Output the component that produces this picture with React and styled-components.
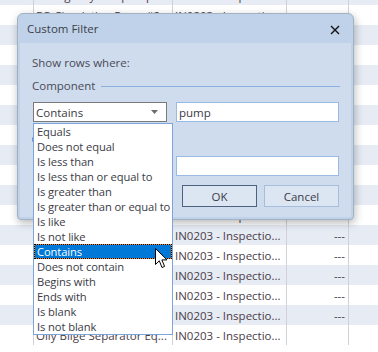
import React from "react";
import styled, { createGlobalStyle } from "styled-components";

const GlobalStyle = createGlobalStyle`
  html, body {
    margin: 0;
    padding: 0;
    background: #ffffff;
    overflow: hidden;
  }
  body {
    font-family: "Open Sans", "Noto Sans", sans-serif;
  }
`;

const rows = [
  { name: "Emergency Fire pump", job: "IN0203 - Inspectio...", due: "" },
  { name: "EQ Circulating Pump#2", job: "IN0203 - Inspectio...", due: "" },
  { name: "", job: "IN0203 - Inspectio...", due: "---" },
  { name: "", job: "IN0203 - Inspectio...", due: "---" },
  { name: "", job: "IN0203 - Inspectio...", due: "---" },
  { name: "", job: "IN0203 - Inspectio...", due: "---" },
  { name: "", job: "IN0203 - Inspectio...", due: "---" },
  { name: "", job: "IN0203 - Inspectio...", due: "---" },
  { name: "", job: "IN0203 - Inspectio...", due: "---" },
  { name: "", job: "IN0203 - Inspectio...", due: "---" },
  { name: "", job: "IN0203 - Inspectio...", due: "---" },
  { name: "", job: "IN0203 - Inspectio...", due: "---" },
  { name: "", job: "IN0203 - Inspectio...", due: "---" },
  { name: "", job: "IN0203 - Inspectio...", due: "---" },
  { name: "", job: "IN0203 - Inspectio...", due: "---" },
  { name: "", job: "IN0203 - Inspectio...", due: "---" },
  { name: "Prelubricating pump", job: "IN0203 - Inspectio...", due: "---" },
  { name: "Oily Bilge Separator Eq...", job: "IN0203 - Inspectio...", due: "" },
];

const operators = [
  "Equals",
  "Does not equal",
  "Is less than",
  "Is less than or equal to",
  "Is greater than",
  "Is greater than or equal to",
  "Is like",
  "Is not like",
  "Contains",
  "Does not contain",
  "Begins with",
  "Ends with",
  "Is blank",
  "Is not blank",
];

const Page = () => {
  return (
    <Screen>
      <GlobalStyle />
      <Grid>
        {rows.map((row, i) => (
          <Row key={i} $alt={i % 2 === 0}>
            <Cell $w={34} />
            <Cell $w={139}>{row.name}</Cell>
            <Cell $w={114}>{row.job}</Cell>
            <Cell $w={62} $right>
              {row.due}
            </Cell>
            <Cell $last />
          </Row>
        ))}
      </Grid>

      <Dialog>
        <TitleBar>
          <Title>Custom Filter</Title>
          <CloseIcon width="10" height="10" viewBox="0 0 10 10">
            <path d="M1 1 L9 9 M9 1 L1 9" stroke="#111" strokeWidth="1.4" />
          </CloseIcon>
        </TitleBar>
        <Body>
          <Caption>Show rows where:</Caption>
          <GroupHeader>
            <span>Component</span>
            <Rule />
          </GroupHeader>
          <FieldRow>
            <Combo>
              <span>Contains</span>
              <ArrowIcon width="7" height="4" viewBox="0 0 7 4">
                <path d="M0 0 H7 L3.5 4 Z" fill="#6d6d6d" />
              </ArrowIcon>
            </Combo>
            <TextBox>pump</TextBox>
          </FieldRow>
          <LogicRow>
            <Radio />
          </LogicRow>
          <FieldRow>
            <Combo />
            <TextBox />
          </FieldRow>
          <ButtonRow>
            <Button $default>OK</Button>
            <Button>Cancel</Button>
          </ButtonRow>
        </Body>
      </Dialog>

      <DropList>
        {operators.map((op) => (
          <Option key={op} $selected={op === "Contains"}>
            {op}
          </Option>
        ))}
      </DropList>

      <Cursor width="13" height="21" viewBox="0 0 13 21">
        <path
          d="M0.5 0.5 L0.5 16.5 L4.3 12.8 L7 19.5 L9.6 18.4 L6.9 11.9 L12 11.9 Z"
          fill="#ffffff"
          stroke="#000000"
          strokeWidth="1"
        />
      </Cursor>
    </Screen>
  );
};

const Screen = styled.div`
  position: relative;
  width: 378px;
  height: 352px;
  overflow: hidden;
  background: #ffffff;
`;

const Grid = styled.div`
  display: flex;
  flex-direction: column;
  margin-top: -15px;
`;

const Row = styled.div`
  display: flex;
  height: 20px;
  background: ${(p) => (p.$alt ? "#e6ebf4" : "#ffffff")};
`;

const Cell = styled.div`
  box-sizing: border-box;
  width: ${(p) => (p.$w ? `${p.$w}px` : "auto")};
  flex: ${(p) => (p.$last ? "1" : "none")};
  border-right: ${(p) => (p.$last ? "none" : "1px solid #cfd2d8")};
  padding: 0 ${(p) => (p.$right ? "3px" : "2px")};
  display: flex;
  align-items: center;
  justify-content: ${(p) => (p.$right ? "flex-end" : "flex-start")};
  font-size: 11.5px;
  color: #4b3d47;
  white-space: nowrap;
  overflow: hidden;
`;

const Dialog = styled.div`
  position: absolute;
  left: 17px;
  top: 13px;
  width: 335px;
  height: 205px;
  background: #bfd2ea;
  border: 1px solid #a3b1c4;
  border-radius: 6px 6px 4px 4px;
  box-shadow: 1px 3px 9px rgba(0, 0, 0, 0.28);
  display: flex;
  flex-direction: column;
`;

const TitleBar = styled.div`
  height: 29px;
  display: flex;
  align-items: center;
  justify-content: space-between;
  padding: 0 13px 0 9px;
`;

const Title = styled.div`
  font-size: 11.5px;
  color: #3d3d48;
`;

const CloseIcon = styled.svg`
  display: block;
  margin-top: 2px;
`;

const Body = styled.div`
  flex: 1;
  margin: 0 2px 2px 2px;
  background: #cedcee;
  padding: 12px 12px 0 12px;
  display: flex;
  flex-direction: column;
`;

const Caption = styled.div`
  font-size: 11.5px;
  color: #4a4a55;
  line-height: 16px;
`;

const GroupHeader = styled.div`
  display: flex;
  align-items: center;
  gap: 6px;
  margin-top: 7px;
  font-size: 11.5px;
  color: #4a4a55;
  line-height: 16px;
`;

const Rule = styled.div`
  flex: 1;
  height: 1px;
  background: #8eb0de;
  margin-right: -1px;
`;

const FieldRow = styled.div`
  display: flex;
  gap: 9px;
  margin-top: 8px;
  padding-left: 1px;

  & + div {
    margin-top: 0;
  }
`;

const Combo = styled.div`
  box-sizing: border-box;
  width: 134px;
  height: 20px;
  background: #ffffff;
  border: 1px solid #7a7a7a;
  display: flex;
  align-items: center;
  justify-content: space-between;
  padding: 0 8px 0 2px;
  font-size: 11.5px;
  color: #3b3b46;
`;

const ArrowIcon = styled.svg`
  display: block;
`;

const TextBox = styled.div`
  box-sizing: border-box;
  width: 163px;
  height: 20px;
  background: #ffffff;
  border: 1px solid #9ab9e3;
  display: flex;
  align-items: center;
  padding-left: 2px;
  font-size: 11.5px;
  color: #3b3b46;
`;

const LogicRow = styled.div`
  height: 34px;
  display: flex;
  align-items: center;

  & + div {
    margin-top: 0;
  }
`;

const Radio = styled.div`
  width: 9px;
  height: 9px;
  border-radius: 50%;
  border: 1px solid #4f86c8;
  background: #eaf2fc;
`;

const ButtonRow = styled.div`
  display: flex;
  justify-content: flex-end;
  gap: 7px;
  margin-top: 9px !important;
`;

const Button = styled.div`
  box-sizing: border-box;
  width: 75px;
  height: 22px;
  background: #dce6f3;
  border: 1px solid ${(p) => (p.$default ? "#4d6180" : "#a6bde0")};
  display: flex;
  align-items: center;
  justify-content: center;
  font-size: 11.5px;
  color: #3b3b46;
`;

const DropList = styled.div`
  position: absolute;
  left: 33px;
  top: 123px;
  width: 138px;
  height: 210px;
  background: #ffffff;
  border: 1px solid #7ea5d9;
  display: flex;
  flex-direction: column;
`;

const Option = styled.div`
  height: 15px;
  box-sizing: border-box;
  display: flex;
  align-items: center;
  padding-left: 2px;
  font-size: 11.2px;
  letter-spacing: -0.1px;
  white-space: nowrap;
  color: ${(p) => (p.$selected ? "#ffffff" : "#3b3b46")};
  background: ${(p) => (p.$selected ? "#0078d7" : "transparent")};
  border: 1px solid ${(p) => (p.$selected ? "#e58a2c" : "transparent")};
  outline: ${(p) => (p.$selected ? "1px dotted #000000" : "none")};
  outline-offset: -1px;
`;

const Cursor = styled.svg`
  position: absolute;
  left: 155px;
  top: 248px;
`;

export default Page;
